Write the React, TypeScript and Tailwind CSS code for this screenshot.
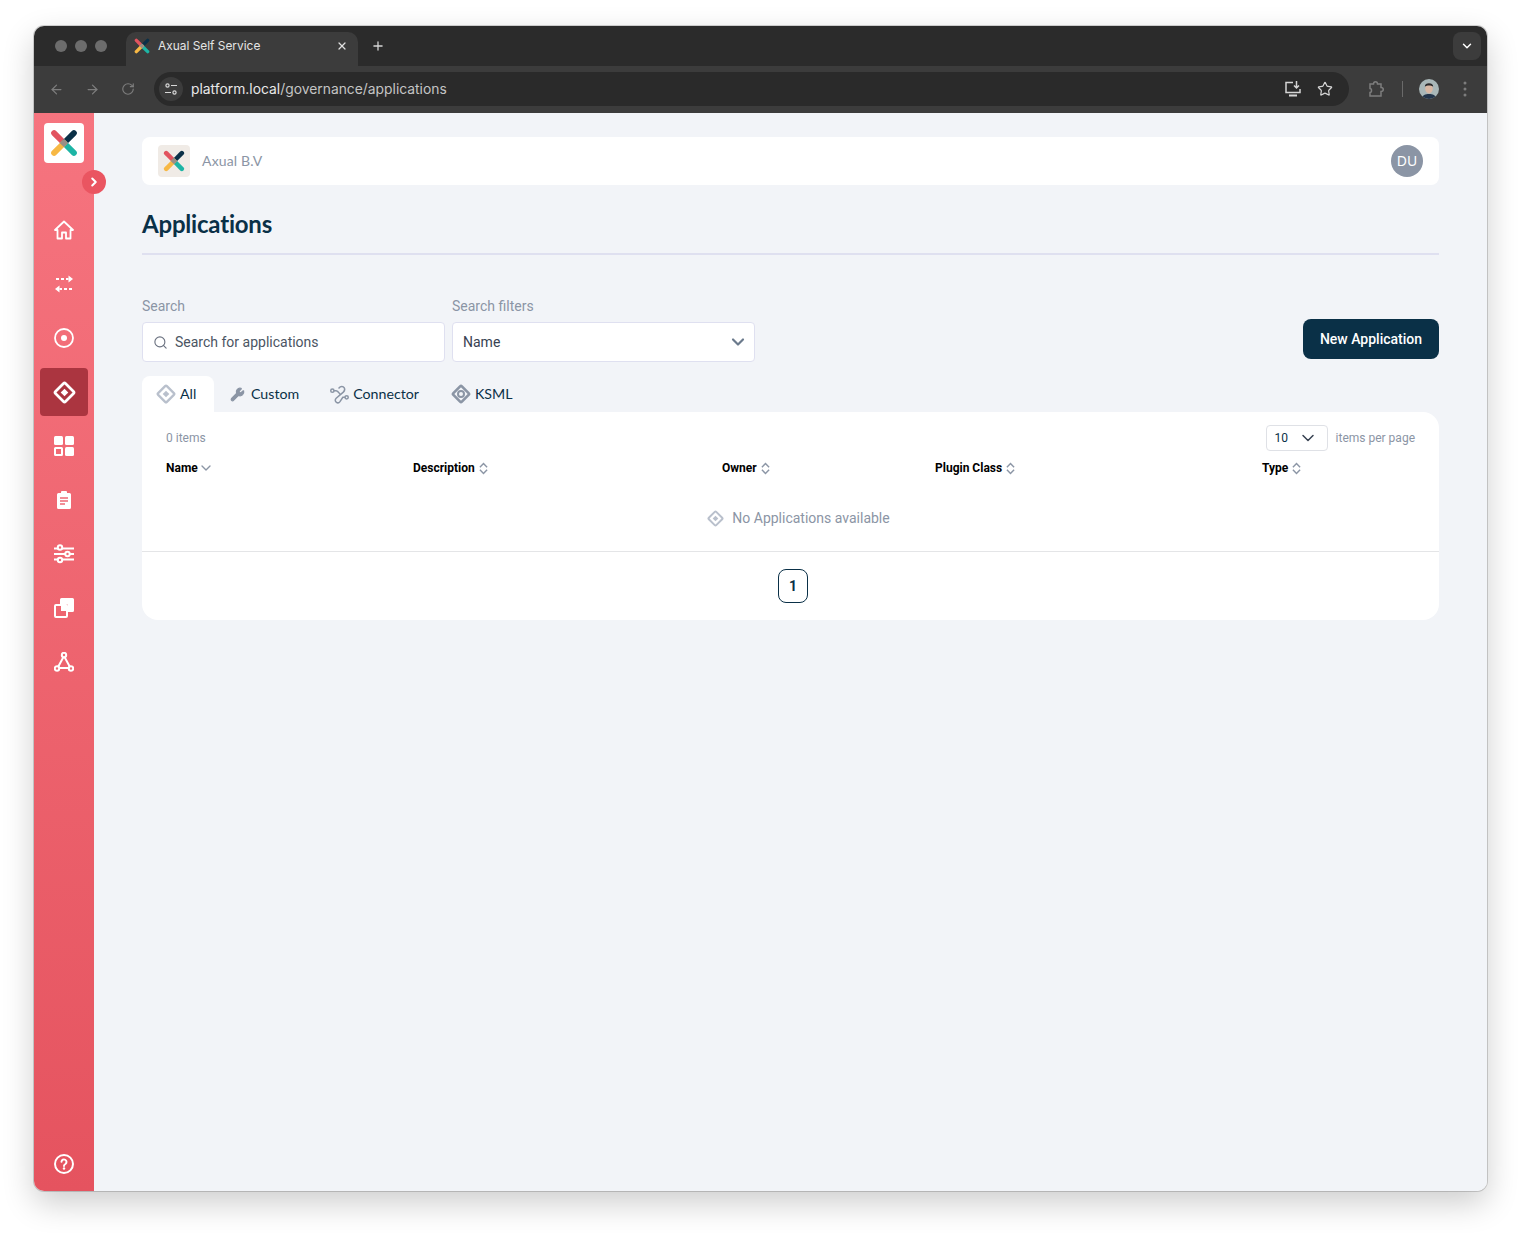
import { ChevronDown, ChevronRight, Plus, X, ArrowLeft, ArrowRight, RotateCw, Star, Search, Wrench } from 'lucide-react';

const Logo = ({ className }: { className: string }) => (
    <svg viewBox="0 0 24 24" className={className} fill="none" strokeWidth="5" strokeLinecap="round">
        <path d="M3.5 3.5 L12 12" stroke="#e2545f" />
        <path d="M20.5 3.5 L12 12" stroke="#0b3047" />
        <path d="M20.5 20.5 L12 12" stroke="#1db5a5" />
        <path d="M3.5 20.5 L12 12" stroke="#f7b844" />
        <rect x="9.4" y="9.4" width="5.2" height="5.2" transform="rotate(45 12 12)" fill="#9a8f86" />
    </svg>
);

const DiamondIcon = ({ className }: { className: string }) => (
    <svg viewBox="0 0 24 24" className={className} fill="none" stroke="currentColor" strokeWidth="2.8" strokeLinejoin="round">
        <rect x="4.6" y="4.6" width="14.8" height="14.8" rx="1.5" transform="rotate(45 12 12)" />
        <rect x="9.2" y="9.2" width="5.6" height="5.6" transform="rotate(45 12 12)" fill="currentColor" stroke="none" />
    </svg>
);

const HomeIcon = () => (
    <svg viewBox="0 0 20 20" className="w-5 h-5" fill="none" stroke="white" strokeWidth="1.8" strokeLinejoin="round">
        <path d="M1 10 10 1.500 19 10h-2.500v8.500H12v-6H8v6H3.500V10z" />
    </svg>
);

const StreamsIcon = () => (
    <svg viewBox="0 0 20 20" className="w-5 h-5" fill="none" stroke="white" strokeWidth="2">
        <path d="M2 5h3M7 5h3M12 5h2.500" />
        <path d="M14.500 1.500 19 5l-4.500 3.500z" fill="white" stroke="none" />
        <path d="M18 15h-3M13 15h-3M8 15H5.500" />
        <path d="M5.500 11.500 1 15l4.500 3.500z" fill="white" stroke="none" />
    </svg>
);

const TargetIcon = () => (
    <svg viewBox="0 0 20 20" className="w-5 h-5" fill="none" stroke="white" strokeWidth="1.8">
        <circle cx="10" cy="10" r="9" />
        <circle cx="10" cy="10" r="3" fill="white" stroke="none" />
    </svg>
);

const GridIcon = () => (
    <svg viewBox="0 0 20 20" className="w-5 h-5" fill="white">
        <rect x="0" y="0" width="9" height="9" rx="1.5" />
        <rect x="11" y="0" width="9" height="9" rx="1.5" />
        <rect x="1" y="12" width="7" height="7" rx="0.5" fill="none" stroke="white" strokeWidth="2" />
        <rect x="11" y="11" width="9" height="9" rx="1.5" />
    </svg>
);

const ClipboardIcon = () => (
    <svg viewBox="0 0 20 20" className="w-5 h-5">
        <path d="M4.5 3H7V2a1 1 0 0 1 1-1h4a1 1 0 0 1 1 1v1h2.500A1.500 1.500 0 0 1 17 4.500v13a1.500 1.500 0 0 1-1.500 1.500h-11A1.500 1.500 0 0 1 3 17.500v-13A1.500 1.500 0 0 1 4.500 3z" fill="white" />
        <path d="M6 8h8M6 11h8M6 14h5" stroke="#ee6a75" strokeWidth="1.5" />
    </svg>
);

const SlidersIcon = () => (
    <svg viewBox="0 0 20 20" className="w-5 h-5" fill="#ee6a75" stroke="white" strokeWidth="2">
        <path d="M0 4.500h20M0 10h20M0 15.500h20" />
        <circle cx="6" cy="3.500" r="2.200" />
        <circle cx="13.500" cy="10" r="2.200" />
        <circle cx="6" cy="16" r="2.200" />
    </svg>
);

const CopyIcon = () => (
    <svg viewBox="0 0 20 20" className="w-5 h-5">
        <path d="M6 1.500A1.500 1.500 0 0 1 7.500 0h11A1.500 1.500 0 0 1 20 1.500v11a1.500 1.500 0 0 1-1.500 1.500H14V7.500A1.500 1.500 0 0 0 12.500 6H6z" fill="white" />
        <rect x="1" y="7" width="12" height="12" rx="1" fill="none" stroke="white" strokeWidth="2" />
        <rect x="7" y="7" width="6" height="6" fill="white" />
    </svg>
);

const TriangleIcon = () => (
    <svg viewBox="0 0 20 20" className="w-5 h-5" fill="none" stroke="white" strokeWidth="2">
        <path d="M10 4 3.500 16h13z" />
        <circle cx="10" cy="3" r="2.200" fill="#ee6a75" />
        <circle cx="3" cy="16.500" r="2.200" fill="#ee6a75" />
        <circle cx="17" cy="16.500" r="2.200" fill="#ee6a75" />
    </svg>
);

const HelpIcon = () => (
    <svg viewBox="0 0 20 20" className="w-5 h-5" fill="none" stroke="white" strokeWidth="2">
        <circle cx="10" cy="10" r="9" />
        <path d="M7.500 7.800A2.500 2.500 0 1 1 11.400 10c-.9.500-1.400 1-1.400 1.900" strokeLinecap="round" />
        <circle cx="10" cy="14.500" r="1.200" fill="white" stroke="none" />
    </svg>
);

const SortIcon = () => (
    <svg viewBox="0 0 10 14" className="w-[9px] h-[13px] ml-1" fill="none" stroke="#8b95a5" strokeWidth="1.6">
        <path d="M1 5.500 5 1.500l4 4M1 8.500l4 4 4-4" />
    </svg>
);

const ConnectorIcon = () => (
    <svg viewBox="0 0 20 20" className="w-[19px] h-[19px]" fill="none" stroke="#8b95a5" strokeWidth="1.6" strokeLinecap="round">
        <circle cx="2.500" cy="6" r="1.700" />
        <circle cx="17.500" cy="13" r="1.700" />
        <path d="M9.500 3.200c1.500-2 4.500-2 5.500-.2s.3 3.200-1 4.500L6.500 14c-1.300 1.300-1.300 3 0 4s3 .8 4-.5l3-4.500h2" />
        <path d="M4.500 6h2c1.500 0 2.500 1.500 4 3.500" />
    </svg>
);

const KsmlIcon = () => (
    <svg viewBox="0 0 24 24" className="w-5 h-5" fill="none" stroke="#8b95a5">
        <rect x="4.800" y="4.800" width="14.400" height="14.400" rx="1.5" transform="rotate(45 12 12)" strokeWidth="3.2" />
        <circle cx="12" cy="12" r="3.600" strokeWidth="2.400" />
    </svg>
);

const Avatar = () => (
    <svg viewBox="0 0 20 20" className="w-5 h-5 rounded-full">
        <rect width="20" height="20" fill="#a9b7b8" />
        <ellipse cx="10" cy="9.500" rx="3.800" ry="5" fill="#d9b8a4" />
        <path d="M5.800 7.500C5.500 3 14.500 3 14.200 7.500 12 6 8 6 5.800 7.500z" fill="#2b2a2c" />
        <path d="M2.500 20c.5-4 4-5 7.500-5s7 1 7.500 5z" fill="#24364c" />
    </svg>
);

const navIcons = [
    { icon: <HomeIcon />, active: false },
    { icon: <StreamsIcon />, active: false },
    { icon: <TargetIcon />, active: false },
    { icon: <DiamondIcon className="w-[23px] h-[23px] text-white" />, active: true },
    { icon: <GridIcon />, active: false },
    { icon: <ClipboardIcon />, active: false },
    { icon: <SlidersIcon />, active: false },
    { icon: <CopyIcon />, active: false },
    { icon: <TriangleIcon />, active: false },
];

const columns = [
    { name: 'Name', width: 'w-[247px]' },
    { name: 'Description', width: 'w-[309px]' },
    { name: 'Owner', width: 'w-[213px]' },
    { name: 'Plugin Class', width: 'w-[327px]' },
    { name: 'Type', width: 'w-[100px]' },
];

const BrowserChrome = () => (
    <div className='font-["Inter",sans-serif] shrink-0'>
        <div className="h-10 bg-[#2b2b2b] flex items-end pl-[92px] pr-[6px] relative">
            <div className="absolute left-[21px] top-[14px] flex gap-2">
                <span className="w-3 h-3 rounded-full bg-[#6c6c6c]" />
                <span className="w-3 h-3 rounded-full bg-[#6c6c6c]" />
                <span className="w-3 h-3 rounded-full bg-[#6c6c6c]" />
            </div>
            <div className="w-[232px] h-[34px] bg-[#3c3c3c] rounded-t-[10px] flex items-center pl-2 pr-[10px] pb-[6px]">
                <Logo className="w-4 h-4 shrink-0" />
                <span className="ml-2 text-[11.9px] text-[#e4e4e4] flex-1">Axual Self Service</span>
                <X className="w-3 h-3 text-[#e0e0e0]" strokeWidth={2.5} />
            </div>
            <Plus className="w-[14px] h-[14px] text-[#d5d5d5] ml-[13px] mb-[13px]" strokeWidth={2.2} />
            <div className="ml-auto w-7 h-7 mb-[6px] rounded-lg bg-[#3c3c3c] flex items-center justify-center">
                <ChevronDown className="w-[14px] h-[14px] text-white" strokeWidth={2.5} />
            </div>
        </div>
        <div className="h-[47px] bg-[#3c3c3c] flex items-center pl-[15px] pr-4 pb-px">
            <ArrowLeft className="w-[15px] h-[15px] text-[#7d7d7d]" />
            <ArrowRight className="w-[15px] h-[15px] text-[#7d7d7d] ml-[21px]" />
            <RotateCw className="w-[14px] h-[14px] text-[#7d7d7d] ml-[21px]" />
            <div className="ml-[19px] w-[1195px] h-[34px] rounded-full bg-[#2a2a2a] flex items-center pl-[5px] pr-[16px]">
                <div className="w-6 h-6 rounded-full bg-[#3c3c3c] flex items-center justify-center">
                    <svg viewBox="0 0 14 14" className="w-[14px] h-[14px]" fill="none" stroke="#d8d8d8" strokeWidth="1.2">
                        <circle cx="3.500" cy="3.500" r="1.600" />
                        <path d="M7 3.500h6M1 10.500h6" />
                        <circle cx="10.500" cy="10.500" r="1.600" />
                    </svg>
                </div>
                <span className="ml-2 text-[13.85px] text-[#e8e8e8]">platform.local<span className="text-[#c4c4c4]">/governance/applications</span></span>
                <svg viewBox="0 0 18 18" className="w-[18px] h-[18px] ml-auto" fill="none" stroke="#d5d5d5" strokeWidth="1.5">
                    <path d="M9 2.500H2v10h14V9" />
                    <path d="M12.500 1v7M10 5.500l2.500 2.500L15 5.500" />
                    <path d="M5 15.500h8" strokeWidth="2" />
                </svg>
                <Star className="w-4 h-4 text-[#d5d5d5] ml-[15px]" strokeWidth={1.8} />
            </div>
            <svg viewBox="0 0 18 18" className="w-[18px] h-[18px] ml-[18px]" fill="none" stroke="#7d7d7d" strokeWidth="1.5">
                <path d="M3 4h3.500c0-3 4-3 4 0H14v3.500c3 0 3 4 0 4V16H3v-3.500c2 0 2-4 0-4z" />
            </svg>
            <span className="w-px h-4 bg-[#6a6a6a] ml-[17px]" />
            <div className="ml-4"><Avatar /></div>
            <svg viewBox="0 0 4 16" className="w-1 h-4 ml-[24px]" fill="#7d7d7d">
                <circle cx="2" cy="2" r="1.500" />
                <circle cx="2" cy="8" r="1.500" />
                <circle cx="2" cy="14" r="1.500" />
            </svg>
        </div>
    </div>
);

const Sidebar = () => (
    <aside className="w-[60px] shrink-0 relative bg-gradient-to-b from-[#f6747f] to-[#e5535f] flex flex-col items-center pt-[10px] pb-[17px]">
        <div className="w-10 h-10 bg-white rounded flex items-center justify-center">
            <Logo className="w-[28px] h-[28px]" />
        </div>
        <button className="absolute left-[48px] top-[57px] w-6 h-6 rounded-full bg-[#ea5561] flex items-center justify-center">
            <ChevronRight className="w-[14px] h-[14px] text-white" strokeWidth={3.5} />
        </button>
        <nav className="mt-[43px] flex flex-col gap-[6px]">
            {navIcons.map((item, index) => (
                <div
                    key={index}
                    className={`w-12 h-12 rounded flex items-center justify-center ${item.active ? 'bg-[#ab3540]' : ''}`}
                >
                    {item.icon}
                </div>
            ))}
        </nav>
        <div className="mt-auto"><HelpIcon /></div>
    </aside>
);

const Main = () => (
    <main className="font-['Roboto',sans-serif] flex-1 bg-[#f2f4f8] px-12 pt-6">
        <div className="h-12 bg-white rounded-lg flex items-center pl-4 pr-4">
            <div className="w-8 h-8 rounded bg-[#f0ebe6] flex items-center justify-center">
                <Logo className="w-[22px] h-[22px]" />
            </div>
            <span className="ml-3 text-sm tracking-[0.15px] text-[#8b95a5] font-['Lato',sans-serif]">Axual B.V</span>
            <div className="ml-auto w-8 h-8 rounded-full bg-[#8b95a5] flex items-center justify-center text-sm text-white font-['Noto_Sans',sans-serif]">DU</div>
        </div>

        <h1 className="mt-[22px] h-[34px] leading-[34px] text-[24px] font-bold tracking-[-0.2px] text-[#0a3047] font-['Lato',sans-serif]">Applications</h1>
        <div className="mt-[12px] h-[2px] bg-[#dfe0f0]" />

        <div className="mt-[43px] flex items-end">
            <label className="w-[303px] block">
                <span className="block text-sm leading-[17px] text-[#8b95a5] mb-[7px]">Search</span>
                <div className="h-10 bg-white border border-[#dfe0f0] rounded flex items-center pl-[10px]">
                    <Search className="w-[15px] h-[15px] text-[#6b7280]" strokeWidth={1.8} />
                    <span className="ml-[7px] text-sm text-[#4b5563]">Search for applications</span>
                </div>
            </label>
            <label className="w-[303px] block ml-[7px]">
                <span className="block text-sm leading-[17px] text-[#8b95a5] mb-[7px]">Search filters</span>
                <div className="h-10 bg-white border border-[#dfe0f0] rounded flex items-center justify-between pl-[10px] pr-[6px]">
                    <span className="text-sm text-[#374151]">Name</span>
                    <ChevronDown className="w-5 h-5 text-[#6b7a8c]" strokeWidth={2.6} />
                </div>
            </label>
            <button className="ml-auto mb-[3px] pb-px w-[136px] h-10 rounded-lg bg-[#0a3047] text-sm font-medium text-white">New Application</button>
        </div>

        <div className="mt-[14px] h-9 flex font-['Lato',sans-serif] text-[14.2px] text-[#0a3047]">
            <div className="w-[72px] bg-white rounded-t-lg flex items-center pl-[14px]">
                <DiamondIcon className="w-5 h-5 text-[#b9c0cc]" />
                <span className="ml-[4px]">All</span>
            </div>
            <div className="flex items-center ml-[16px]">
                <Wrench className="w-[15px] h-[15px] text-[#8b95a5]" fill="#8b95a5" />
                <span className="ml-[6px]">Custom</span>
            </div>
            <div className="flex items-center ml-[31px]">
                <ConnectorIcon />
                <span className="ml-[4px]">Connector</span>
            </div>
            <div className="flex items-center ml-[32px]">
                <KsmlIcon />
                <span className="ml-[4px]">KSML</span>
            </div>
        </div>

        <div className="bg-white rounded-b-2xl rounded-tr-2xl h-[208px]">
            <div className="pl-6 pr-6 pt-[12px] flex items-center justify-between h-[40px]">
                <span className="text-xs text-[#8b95a5]">0 items</span>
                <div className="flex items-center">
                    <div className="w-[62px] h-[26px] border border-[#dfe1e6] rounded flex items-center justify-between pl-2 pr-[9px]">
                        <span className="text-xs text-[#0a3047]">10</span>
                        <ChevronDown className="w-5 h-5 text-[#374151]" strokeWidth={1.8} />
                    </div>
                    <span className="ml-2 text-xs text-[#8b95a5]">items per page</span>
                </div>
            </div>
            <div className="pl-6 mt-[8px] flex h-4 items-center">
                {columns.map((col, index) => (
                    <div key={col.name} className={`${col.width} flex items-center text-xs font-bold text-black`}>
                        {col.name}
                        {index === 0
                            ? <ChevronDown className="w-4 h-4 text-[#8b95a5]" strokeWidth={2} />
                            : <SortIcon />}
                    </div>
                ))}
            </div>
            <div className="mt-[29px] h-[26px] flex items-center justify-center pl-4 text-sm text-[#8b95a5]">
                <DiamondIcon className="w-[17px] h-[17px] text-[#b9c0cc]" />
                <span className="ml-2">No Applications available</span>
            </div>
            <div className="mt-[20px] border-t border-[#e4e5e7] h-[69px] flex items-center justify-center">
                <div className="ml-[5px] w-[30px] h-[34px] border border-[#0a3047] rounded-lg flex items-center justify-center text-sm font-bold text-[#0a3047]">1</div>
            </div>
        </div>
    </main>
);

export default function App() {
    return (
        <div className="w-[1521px] h-[1233px] bg-white pl-[34px] pt-[26px] overflow-hidden">
            <div className="w-[1453px] h-[1165px] rounded-[10px] overflow-hidden flex flex-col shadow-[0_0_0_1px_rgba(0,0,0,0.16),0_12px_32px_rgba(0,0,0,0.2)]">
                <BrowserChrome />
                <div className="flex-1 flex min-h-0">
                    <Sidebar />
                    <Main />
                </div>
            </div>
        </div>
    );
}
